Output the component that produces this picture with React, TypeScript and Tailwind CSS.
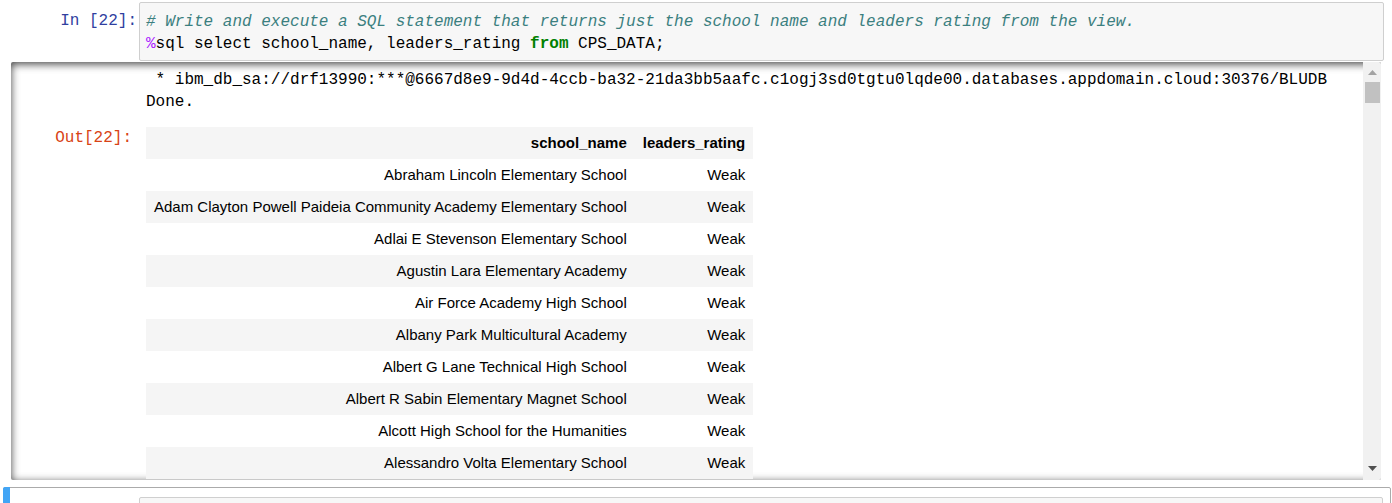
const MONO = "font-['Liberation_Mono',monospace]";

const ROWS = [
  'Abraham Lincoln Elementary School',
  'Adam Clayton Powell Paideia Community Academy Elementary School',
  'Adlai E Stevenson Elementary School',
  'Agustin Lara Elementary Academy',
  'Air Force Academy High School',
  'Albany Park Multicultural Academy',
  'Albert G Lane Technical High School',
  'Albert R Sabin Elementary Magnet School',
  'Alcott High School for the Humanities',
  'Alessandro Volta Elementary School',
];

function Scrollbar() {
  return (
    <div className="w-[18px] shrink-0 bg-[#f1f1f1] flex flex-col items-center">
      <div className="h-[18px] w-full flex items-center justify-center pt-[2px]">
        <svg width="9" height="5" viewBox="0 0 9 5">
          <path d="M0 5 L4.5 0 L9 5 Z" fill="#a3a3a3" />
        </svg>
      </div>
      <div className="mt-[2px] h-[21px] w-[15px] bg-[#c1c1c1]" />
      <div className="flex-1" />
      <div className="h-[18px] w-full flex items-center justify-center pb-[6px]">
        <svg width="9" height="5" viewBox="0 0 9 5">
          <path d="M0 0 L4.5 5 L9 0 Z" fill="#505050" />
        </svg>
      </div>
    </div>
  );
}

export default function App() {
  return (
    <div className="w-[1392px] h-[503px] bg-white overflow-hidden text-black">
      {/* input cell */}
      <div className="flex pt-[2px]">
        <div className={`${MONO} w-[139px] shrink-0 text-right pr-[2px] pt-[8px] text-[16px] leading-[22px] text-[#303F9F]`}>
          In&nbsp;[22]:
        </div>
        <div className={`${MONO} w-[1245px] h-[59px] border border-[#cfcfcf] bg-[#f7f7f7] rounded-[2px] pl-[6px] pt-[8px] text-[16px] leading-[22px] whitespace-pre`}>
          <div className="italic text-[#3b7f7f]">
            # Write and execute a SQL statement that returns just the school name and leaders rating from the view.
          </div>
          <div>
            <span className="text-[#AA22FF]">%</span>sql select school_name, leaders_rating{' '}
            <span className="font-bold text-[#008000]">from</span> CPS_DATA;
          </div>
        </div>
      </div>

      {/* scrolled output */}
      <div className="ml-[11px] mt-[1px] w-[1370px] h-[418px] rounded-[2px] shadow-[inset_0_2px_9px_rgba(0,0,0,0.75)] flex overflow-hidden">
        <div className="flex-1 overflow-hidden">
          <div className="flex pt-[7px]">
            <div className="w-[135px] shrink-0" />
            <div className={`${MONO} text-[16px] leading-[22px] whitespace-pre`}>
              {' * ibm_db_sa://drf13990:***@6667d8e9-9d4d-4ccb-ba32-21da3bb5aafc.c1ogj3sd0tgtu0lqde00.databases.appdomain.cloud:30376/BLUDB'}
              {'\n'}Done.
            </div>
          </div>
          <div className="flex mt-[14px]">
            <div className={`${MONO} w-[121px] shrink-0 text-right text-[16px] leading-[22px] text-[#D84315]`}>
              Out[22]:
            </div>
            <table className="ml-[14px] border-collapse font-['Liberation_Sans',Arial,sans-serif] text-[15px] leading-[17px]">
              <tbody>
                <tr className="bg-[#f5f5f5]">
                  <th className="h-[32px] px-2 pb-[2px] text-right font-bold">school_name</th>
                  <th className="h-[32px] px-2 pb-[2px] text-right font-bold">leaders_rating</th>
                </tr>
                {ROWS.map((name, i) => (
                  <tr key={name} className={i % 2 === 1 ? 'bg-[#f5f5f5]' : 'bg-white'}>
                    <td className="h-[32px] px-2 pb-[2px] text-right">{name}</td>
                    <td className="h-[32px] px-2 pb-[2px] text-right">Weak</td>
                  </tr>
                ))}
              </tbody>
            </table>
          </div>
        </div>
        <Scrollbar />
      </div>

      {/* next (selected) cell */}
      <div className="relative mt-[7px] ml-[3px] w-[1388px] h-[40px] border border-[#ababab] rounded-[2px] pl-[135px] pt-[9px]">
        <div className="absolute left-[-1px] top-[-1px] bottom-[-1px] w-[7px] bg-[#42A5F5] rounded-l-[2px]" />
        <div className="w-[1244px] h-[40px] border border-[#cfcfcf] bg-[#f7f7f7] rounded-[2px]" />
      </div>
    </div>
  );
}
